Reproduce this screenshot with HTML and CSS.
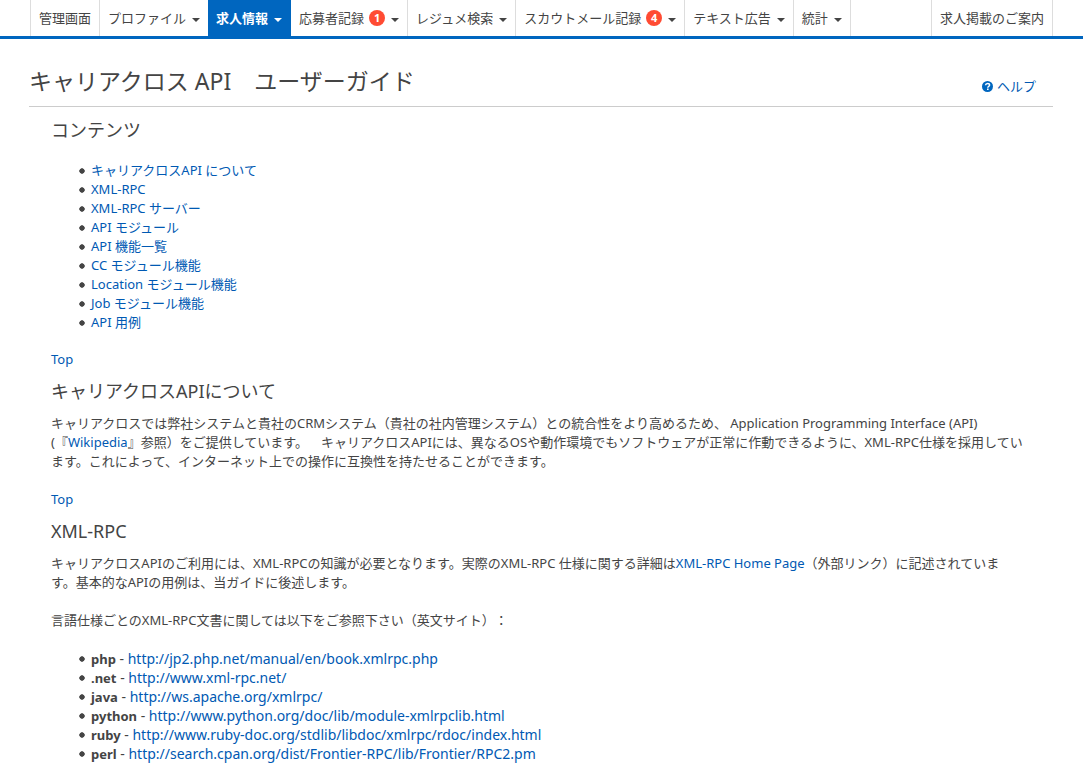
FILE: index.html
```html
<!DOCTYPE html>
<html lang="ja">
<head>
<meta charset="utf-8">
<title>キャリアクロス API ユーザーガイド</title>
<link rel="stylesheet" href="styles.css">
</head>
<body>
<nav class="navbar">
  <ul class="nav">
    <li><a href="#">管理画面</a></li>
    <li><a href="#">プロファイル<span class="caret"></span></a></li>
    <li class="active"><a href="#">求人情報<span class="caret"></span></a></li>
    <li><a href="#">応募者記録<span class="badge">1</span><span class="caret"></span></a></li>
    <li><a href="#">レジュメ検索<span class="caret"></span></a></li>
    <li><a href="#">スカウトメール記録<span class="badge">4</span><span class="caret"></span></a></li>
    <li><a href="#">テキスト広告<span class="caret"></span></a></li>
    <li><a href="#">統計<span class="caret"></span></a></li>
  </ul>
  <ul class="nav">
    <li><a href="#">求人掲載のご案内</a></li>
  </ul>
</nav>
<main class="page">
  <header class="page-header">
    <h1>キャリアクロス API　ユーザーガイド</h1>
    <a class="help" href="#"><svg width="11" height="11" viewBox="0 0 22 22" aria-hidden="true"><circle cx="11" cy="11" r="11" fill="#0066bf"/><path d="M7 8.5C7.3 5.8 9 4.8 11.2 4.8c2.3 0 4 1.3 4 3.4 0 2.8-3.6 2.8-3.6 5.2" fill="none" stroke="#fff" stroke-width="3"/><path d="M10 15h3.200v3H10z" fill="#fff"/></svg>ヘルプ</a>
  </header>
  <div class="content">
    <section>
      <h2 id="top">コンテンツ</h2>
      <ul>
        <li><a href="#about">キャリアクロスAPI について</a></li>
        <li><a href="#xmlrpc">XML-RPC</a></li>
        <li><a href="#">XML-RPC サーバー</a></li>
        <li><a href="#">API モジュール</a></li>
        <li><a href="#">API 機能一覧</a></li>
        <li><a href="#">CC モジュール機能</a></li>
        <li><a href="#">Location モジュール機能</a></li>
        <li><a href="#">Job モジュール機能</a></li>
        <li><a href="#">API 用例</a></li>
      </ul>
    </section>
    <section>
      <a class="to-top" href="#top">Top</a>
      <h2 id="about">キャリアクロスAPIについて</h2>
      <p>キャリアクロスでは弊社システムと貴社のCRMシステム（貴社の社内管理システム）との統合性をより高めるため、 Application Programming Interface (API) (『<a href="#">Wikipedia</a>』参照）をご提供しています。　キャリアクロスAPIには、異なるOSや動作環境でもソフトウェアが正常に作動できるように、XML-RPC仕様を採用しています。これによって、インターネット上での操作に互換性を持たせることができます。</p>
    </section>
    <section>
      <a class="to-top" href="#top">Top</a>
      <h2 id="xmlrpc">XML-RPC</h2>
      <p>キャリアクロスAPIのご利用には、XML-RPCの知識が必要となります。実際のXML-RPC 仕様に関する詳細は<a href="#">XML-RPC Home Page</a>（外部リンク）に記述されていま<br>す。基本的なAPIの用例は、当ガイドに後述します。</p>
      <p>言語仕様ごとのXML-RPC文書に関しては以下をご参照下さい（英文サイト）：</p>
      <ul class="links">
        <li><strong>php</strong> - <a href="#">http://jp2.php.net/manual/en/book.xmlrpc.php</a></li>
        <li><strong>.net</strong> - <a href="#">http://www.xml-rpc.net/</a></li>
        <li><strong>java</strong> - <a href="#">http://ws.apache.org/xmlrpc/</a></li>
        <li><strong>python</strong> - <a href="#">http://www.python.org/doc/lib/module-xmlrpclib.html</a></li>
        <li><strong>ruby</strong> - <a href="#">http://www.ruby-doc.org/stdlib/libdoc/xmlrpc/rdoc/index.html</a></li>
        <li><strong>perl</strong> - <a href="#">http://search.cpan.org/dist/Frontier-RPC/lib/Frontier/RPC2.pm</a></li>
      </ul>
    </section>
  </div>
</main>
</body>
</html>
```
FILE: styles.css
```css
* { box-sizing: border-box; }
body {
  margin: 0;
  background: #fff;
  color: #444;
  font-family: "Noto Sans", "Noto Sans CJK JP", sans-serif;
  font-size: 13px;
  line-height: 19px;
  text-spacing-trim: space-all;
}
a { color: #0059b3; text-decoration: none; }

.navbar {
  display: flex;
  justify-content: space-between;
  padding: 0 30px;
  border-bottom: 3px solid #0066bf;
}
.nav {
  display: flex;
  margin: 0;
  padding: 0;
  list-style: none;
  border-left: 1px solid #ddd;
}
.nav a {
  display: flex;
  align-items: center;
  height: 36px;
  padding: 0 8px;
  border-right: 1px solid #ddd;
  color: #444;
  white-space: nowrap;
}
.nav .active { margin-left: -1px; }
.nav .active a {
  background: #0066bf;
  border-color: #0066bf;
  color: #fff;
  font-weight: 700;
}
.caret {
  margin: 4px 0 0 6px;
  border: 4px solid transparent;
  border-top-color: currentColor;
  border-bottom: 0;
}
.badge {
  width: 16px;
  height: 16px;
  margin-left: 5px;
  border-radius: 50%;
  background: #ff4b33;
  color: #fff;
  font-size: 11px;
  font-weight: 700;
  line-height: 16px;
  text-align: center;
}

.page { padding: 0 30px 0 29px; }
.page-header {
  display: flex;
  justify-content: space-between;
  align-items: center;
  padding: 25px 17px 8px 0;
  border-bottom: 1px solid #ccc;
}
h1 {
  margin: 0;
  font-size: 23px;
  font-weight: 400;
  line-height: 34px;
}
.help {
  display: flex;
  align-items: center;
  gap: 4px;
  padding-top: 10px;
}
.content { padding: 1px 22px 0; }
h2 {
  margin: 9px 0 10px;
  font-size: 18px;
  font-weight: 400;
  line-height: 26px;
}
.content p { margin: 0 0 19px; }
.content ul {
  margin: 18px 0;
  padding-left: 27px;
  list-style: none;
}
.content li {
  padding-left: 13px;
  background: radial-gradient(circle closest-side, #444 80%, transparent) 1px 7px / 6px 6px no-repeat;
}
.links { font-size: 14px; }
.links strong {
  font-size: 13px;
  line-height: 16px;
}
.to-top { display: block; width: max-content; }
```
